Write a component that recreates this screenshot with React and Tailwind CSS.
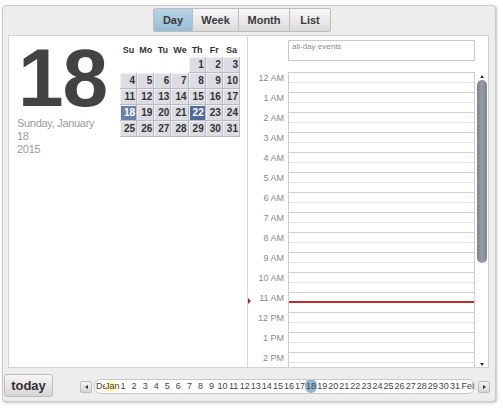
import React from "react";

const hours = [
  "12 AM", "1 AM", "2 AM", "3 AM", "4 AM", "5 AM", "6 AM", "7 AM", "8 AM", "9 AM", "10 AM", "11 AM",
  "12 PM", "1 PM", "2 PM", "3 PM", "4 PM", "5 PM", "6 PM", "7 PM", "8 PM", "9 PM", "10 PM", "11 PM",
];

const weeks = [
  [null, null, null, null, 1, 2, 3],
  [4, 5, 6, 7, 8, 9, 10],
  [11, 12, 13, 14, 15, 16, 17],
  [18, 19, 20, 21, 22, 23, 24],
  [25, 26, 27, 28, 29, 30, 31],
];

function Tab({ label, width, active, first, last }) {
  return (
    <div
      className={`h-[24px] flex items-center justify-center border-y border-r border-[#bdbdbd] text-[11px] font-bold text-[#3a3a3a] ${width} ${
        first ? "border-l rounded-l-[2px]" : ""
      } ${last ? "rounded-r-[2px]" : ""} ${
        active
          ? "bg-gradient-to-b from-[#b9d4e6] to-[#97bcd6] border-[#8fb0c8]"
          : "bg-gradient-to-b from-[#f7f7f7] to-[#dcdcdc]"
      }`}
    >
      {label}
    </div>
  );
}

function MiniCalendar() {
  return (
    <div className="mt-[7px] ml-[8px] w-[120px]">
      <div className="grid grid-cols-7 h-[14px] text-[9px] font-bold text-[#333] leading-[14px]">
        {["Su", "Mo", "Tu", "We", "Th", "Fr", "Sa"].map((d) => (
          <div key={d} className="text-center">
            {d}
          </div>
        ))}
      </div>
      {weeks.map((w, i) => (
        <div key={i} className="grid grid-cols-7">
          {w.map((d, j) => {
            if (d === null) return <div key={j} className="h-[16px]" />;
            let cls = "bg-[#dcdde3] text-[#333]";
            if (d === 18) cls = "bg-[#6b80a6] text-white";
            if (d === 22) cls = "bg-[#4e6b9e] text-white";
            return (
              <div
                key={j}
                className={`h-[16px] text-right pr-[2px] text-[10px] font-bold leading-[16px] shadow-[inset_-1px_-1px_0_#b8bbc3,inset_1px_1px_0_#eff0f4] ${cls}`}
              >
                {d}
              </div>
            );
          })}
        </div>
      ))}
    </div>
  );
}

function LeftPane() {
  return (
    <div className="w-[239px] h-full border-r border-[#d6d6d6] flex">
      <div className="w-[103px] pl-[8px]">
        <div className="mt-[6px] ml-[1px] h-[72px] text-[82px] leading-[72px] font-bold text-[#434343] tracking-[-1px]">
          18
        </div>
        <div className="mt-[3px] text-[11px] leading-[13px] text-[#9c9c9c] tracking-[-0.3px]">
          <div>Sunday, January</div>
          <div>18</div>
          <div>2015</div>
        </div>
      </div>
      <MiniCalendar />
    </div>
  );
}

function RightPane() {
  return (
    <div className="relative flex-1 h-full flex flex-col">
      {/* all-day */}
      <div className="h-[36px] flex">
        <div className="w-[40px]" />
        <div className="mt-[4px] w-[187px] h-[21px] border border-[#c9c9c9] px-[3px] text-[8px] leading-[11px] text-[#8a8a8a]">
          all-day events
        </div>
      </div>
      {/* time grid */}
      <div className="flex-1 flex overflow-hidden">
        <div className="w-[40px] shrink-0">
          {hours.map((h) => (
            <div
              key={h}
              className="h-[20px] text-right pr-[4px] text-[9px] leading-[12px] text-[#8a8a8a]"
            >
              {h}
            </div>
          ))}
        </div>
        <div className="relative w-[187px] shrink-0 border-l border-t border-r border-[#cccccc]">
          {hours.map((h) => (
            <div key={h} className="h-[20px]">
              <div className="h-[10px] border-b border-[#e2e2e2]" />
              <div className="h-[10px] border-b border-[#cfcfcf]" />
            </div>
          ))}
          <div className="absolute left-0 right-0 top-[228px] h-[2px] bg-[#c62a2a]" />
        </div>
        {/* scrollbar */}
        <div className="relative w-[12px] shrink-0 ml-[1px]">
          <div className="absolute left-[4px] top-[3px] w-0 h-0 border-l-[2px] border-r-[2px] border-b-[3px] border-l-transparent border-r-transparent border-b-[#333]" />
          <div className="absolute left-[1px] top-[8px] w-[10px] h-[183px] rounded-full bg-gradient-to-r from-[#7f858e] via-[#969ca5] to-[#7f858e]" />
          <div className="absolute left-[4px] bottom-[1px] w-0 h-0 border-l-[2px] border-r-[2px] border-t-[3px] border-l-transparent border-r-transparent border-t-[#333]" />
        </div>
      </div>
      {/* now marker */}
      <div className="absolute left-[0px] top-[262px] w-0 h-0 border-t-[3px] border-b-[3px] border-l-[3px] border-t-transparent border-b-transparent border-l-[#b02020]" />
    </div>
  );
}

function Timeline() {
  const days = Array.from({ length: 31 }, (_, i) => i + 1);
  return (
    <div className="flex items-center">
      <div className="w-[12px] h-[12px] border border-[#bdbdbd] rounded-[2px] bg-gradient-to-b from-[#f4f4f4] to-[#d6d6d6] flex items-center justify-center">
        <div className="w-0 h-0 border-t-[2.5px] border-b-[2.5px] border-r-[3px] border-t-transparent border-b-transparent border-r-[#333]" />
      </div>
      <div className="ml-[2px] w-[381px] h-[15px] rounded-[7px] border border-[#c8c8c8] bg-white flex items-center overflow-hidden text-[9px] leading-[13px] text-[#444] pl-[1px]">
        <div className="w-[9px] shrink-0 overflow-hidden whitespace-nowrap">Dec</div>
        <div className="relative w-[12.5px] shrink-0 whitespace-nowrap">
          <div className="absolute left-[1px] top-[-1px] w-[10px] h-[15px] rounded-full bg-[radial-gradient(circle,#fff27a_0%,#fff5a8_45%,rgba(255,255,255,0)_75%)]" />
          <span className="relative">Jan</span>
        </div>
        {days.map((d) => (
          <div key={d} className="relative w-[11.07px] shrink-0 text-center">
            {d === 18 && (
              <div className="absolute left-[-1px] top-[-1px] w-[12px] h-[14px] rounded-full bg-[#93b7d3]" />
            )}
            <span className="relative">{d}</span>
          </div>
        ))}
        <div className="shrink-0 pl-[1px] whitespace-nowrap">Feb</div>
      </div>
      <div className="ml-[3px] w-[12px] h-[12px] border border-[#bdbdbd] rounded-[2px] bg-gradient-to-b from-[#f4f4f4] to-[#d6d6d6] flex items-center justify-center">
        <div className="w-0 h-0 border-t-[2.5px] border-b-[2.5px] border-l-[3px] border-t-transparent border-b-transparent border-l-[#333]" />
      </div>
    </div>
  );
}

export default function App() {
  return (
    <div className="w-[503px] h-[410px] bg-white pt-[5px] pl-[2px] font-['Liberation_Sans',Arial,sans-serif]">
      <div className="w-[494px] h-[397px] bg-[#ededed] border border-[#c9c9c9] rounded-[4px] shadow-[1px_1px_3px_rgba(0,0,0,0.25)] flex flex-col">
        {/* view tabs */}
        <div className="h-[29px] pt-[2px] flex justify-center">
          <div className="flex ml-[-14px]">
            <Tab label="Day" width="w-[40px]" active first />
            <Tab label="Week" width="w-[46px]" />
            <Tab label="Month" width="w-[51px]" />
            <Tab label="List" width="w-[41px]" last />
          </div>
        </div>
        {/* main panel */}
        <div className="ml-[5px] w-[481px] h-[333px] bg-white border border-[#d0d0d0] flex">
          <LeftPane />
          <RightPane />
        </div>
        {/* bottom bar */}
        <div className="flex-1 flex items-start">
          <div className="mt-[6px] ml-[1px] w-[49px] h-[23px] border border-[#bcbcbc] rounded-[3px] bg-gradient-to-b from-[#f7f7f7] to-[#d5d5d5] flex items-center justify-center text-[13px] font-bold text-[#333]">
            today
          </div>
          <div className="mt-[11px] ml-[27px]">
            <Timeline />
          </div>
        </div>
      </div>
    </div>
  );
}
